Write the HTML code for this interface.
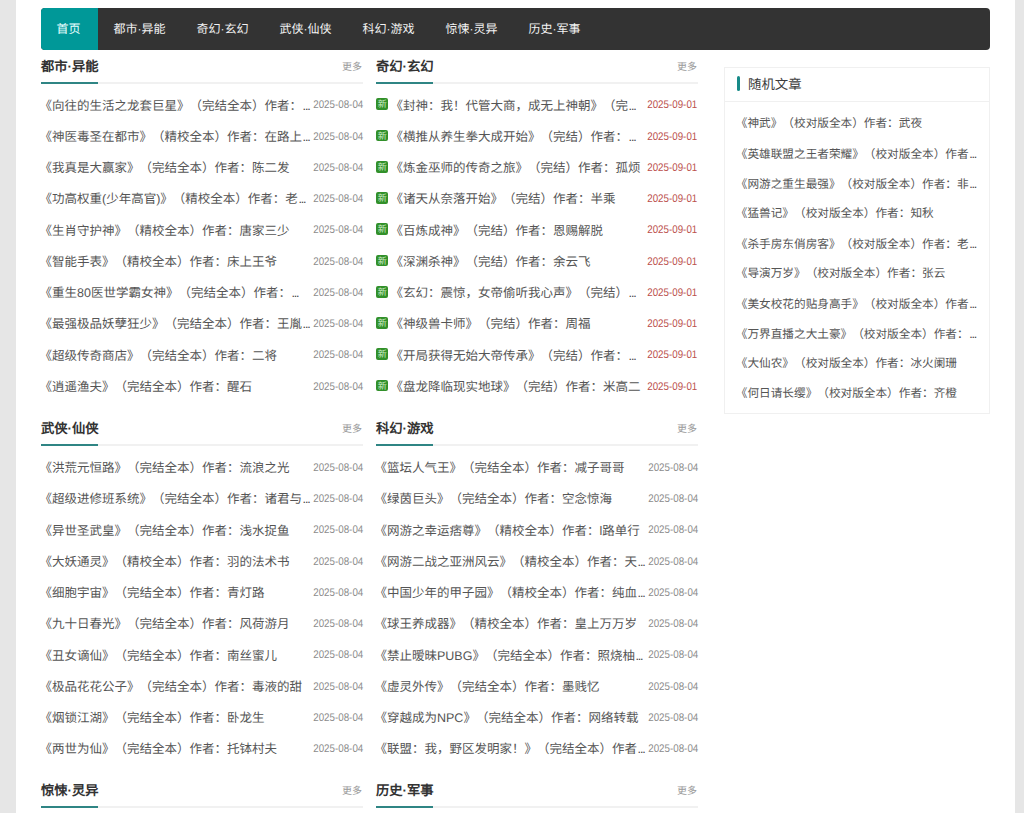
<!DOCTYPE html><html lang="zh-CN"><head><meta charset="utf-8"><title>page</title><style>
*{margin:0;padding:0;box-sizing:border-box}
html,body{width:1024px;height:813px;overflow:hidden}
body{background:#e6e6e6;font-family:"Liberation Sans",sans-serif;color:#444;position:relative;text-spacing-trim:space-all;text-rendering:geometricPrecision}
.wrap{position:absolute;left:16px;top:0;width:999px;height:813px;background:#fff}
.nav{position:absolute;left:41px;top:8px;width:949px;height:42px;background:#333;border-radius:4px;overflow:hidden}
.nav a{position:absolute;top:0;height:42px;line-height:42px;text-align:center;color:#f2f2f2;font-size:12px;text-decoration:none;white-space:nowrap}
.nav a.on{background:#009898;color:#e9ffff}
.sec{position:absolute;width:322px;height:362px}
.sec h2{position:absolute;left:0;top:58px;height:18px;line-height:18px;font-size:13.3px;font-weight:bold;color:#333;white-space:nowrap}
.sec .more{position:absolute;right:1px;top:61px;height:14px;line-height:14px;font-size:10px;color:#999}
.sec .ln{position:absolute;left:0;top:81.5px;width:322px;height:2px;background:#f1f1f1}
.sec .ul{position:absolute;left:0;top:81.5px;width:57px;height:2px;background:#2f8584}
.row{position:absolute;left:0;width:322px;height:20px;line-height:20px;white-space:nowrap}
.row .t{position:absolute;left:-1.5px;top:0;width:275px;overflow:hidden;font-size:12.5px;color:#555}
.row.i .t{left:14.5px;width:260px}
.row .d{position:absolute;right:0;top:-0.4px;font-size:11px;color:#8c8c8c;transform:scaleX(0.89);transform-origin:100% 50%;text-align:right}
.row.i .d{color:#bb4f4b;right:1px}
.row .ic{position:absolute;left:0;top:2.7px;width:12.3px;height:11.7px;background:#32902a;border-radius:2px;color:#cfeec8;font-size:9px;line-height:12px;text-align:center}
.side{position:absolute;left:724px;top:67px;width:266px;height:347px;border:1px solid #f0f0f0;background:#fff}
.side .hd{position:absolute;left:0;top:0;width:264px;height:34px;border-bottom:1px solid #f0f0f0}
.side .bar{position:absolute;left:11.8px;top:7.7px;width:3.3px;height:15px;background:#178a88;border-radius:2px}
.side .hd span{position:absolute;left:23px;top:8px;font-size:13.4px;line-height:17px;color:#3c3c3c}
.side .it{position:absolute;left:10.8px;width:250px;height:18px;line-height:18px;font-size:11.65px;color:#555;white-space:nowrap;overflow:hidden}
.el{font-style:normal;font-family:"Liberation Sans";font-size:12.5px;letter-spacing:-1.2px;margin-left:0.6px;color:#444}
</style></head><body>
<div class="wrap"></div>
<div class="nav">
<a class="on" style="left:0;width:57px;text-indent:-2px">首页</a>
<a style="left:57px;width:83px">都市·异能</a>
<a style="left:140px;width:83px">奇幻·玄幻</a>
<a style="left:223px;width:83px">武侠·仙侠</a>
<a style="left:306px;width:83px">科幻·游戏</a>
<a style="left:389px;width:83px">惊悚·灵异</a>
<a style="left:472px;width:83px">历史·军事</a>
</div>
<div class="sec" style="left:41px;top:0px"><h2>都市·异能</h2><span class="more">更多</span><div class="ln"></div><div class="ul"></div><div class="row" style="top:95.70px"><span class="t">《向往的生活之龙套巨星》（完结全本）作者：<i class="el">...</i></span><span class="d">2025-08-04</span></div><div class="row" style="top:126.95px"><span class="t">《神医毒圣在都市》（精校全本）作者：在路上<i class="el">...</i></span><span class="d">2025-08-04</span></div><div class="row" style="top:158.20px"><span class="t">《我真是大赢家》（完结全本）作者：陈二发</span><span class="d">2025-08-04</span></div><div class="row" style="top:189.45px"><span class="t">《功高权重(少年高官)》（精校全本）作者：老<i class="el">...</i></span><span class="d">2025-08-04</span></div><div class="row" style="top:220.70px"><span class="t">《生肖守护神》（精校全本）作者：唐家三少</span><span class="d">2025-08-04</span></div><div class="row" style="top:251.95px"><span class="t">《智能手表》（精校全本）作者：床上王爷</span><span class="d">2025-08-04</span></div><div class="row" style="top:283.20px"><span class="t">《重生80医世学霸女神》（完结全本）作者：<i class="el">...</i></span><span class="d">2025-08-04</span></div><div class="row" style="top:314.45px"><span class="t">《最强极品妖孽狂少》（完结全本）作者：王胤<i class="el">...</i></span><span class="d">2025-08-04</span></div><div class="row" style="top:345.70px"><span class="t">《超级传奇商店》（完结全本）作者：二将</span><span class="d">2025-08-04</span></div><div class="row" style="top:376.95px"><span class="t">《逍遥渔夫》（完结全本）作者：醒石</span><span class="d">2025-08-04</span></div></div>
<div class="sec" style="left:376px;top:0px"><h2>奇幻·玄幻</h2><span class="more">更多</span><div class="ln"></div><div class="ul"></div><div class="row i" style="top:95.70px"><span class="ic">新</span><span class="t">《封神：我！代管大商，成无上神朝》（完<i class="el">...</i></span><span class="d">2025-09-01</span></div><div class="row i" style="top:126.95px"><span class="ic">新</span><span class="t">《横推从养生拳大成开始》（完结）作者：<i class="el">...</i></span><span class="d">2025-09-01</span></div><div class="row i" style="top:158.20px"><span class="ic">新</span><span class="t">《炼金巫师的传奇之旅》（完结）作者：孤烦</span><span class="d">2025-09-01</span></div><div class="row i" style="top:189.45px"><span class="ic">新</span><span class="t">《诸天从奈落开始》（完结）作者：半乘</span><span class="d">2025-09-01</span></div><div class="row i" style="top:220.70px"><span class="ic">新</span><span class="t">《百炼成神》（完结）作者：恩赐解脱</span><span class="d">2025-09-01</span></div><div class="row i" style="top:251.95px"><span class="ic">新</span><span class="t">《深渊杀神》（完结）作者：余云飞</span><span class="d">2025-09-01</span></div><div class="row i" style="top:283.20px"><span class="ic">新</span><span class="t">《玄幻：震惊，女帝偷听我心声》（完结）<i class="el">...</i></span><span class="d">2025-09-01</span></div><div class="row i" style="top:314.45px"><span class="ic">新</span><span class="t">《神级兽卡师》（完结）作者：周福</span><span class="d">2025-09-01</span></div><div class="row i" style="top:345.70px"><span class="ic">新</span><span class="t">《开局获得无始大帝传承》（完结）作者：<i class="el">...</i></span><span class="d">2025-09-01</span></div><div class="row i" style="top:376.95px"><span class="ic">新</span><span class="t">《盘龙降临现实地球》（完结）作者：米高二</span><span class="d">2025-09-01</span></div></div>
<div class="sec" style="left:41px;top:362px"><h2>武侠·仙侠</h2><span class="more">更多</span><div class="ln"></div><div class="ul"></div><div class="row" style="top:96.20px"><span class="t">《洪荒元恒路》（完结全本）作者：流浪之光</span><span class="d">2025-08-04</span></div><div class="row" style="top:127.45px"><span class="t">《超级进修班系统》（完结全本）作者：诸君与<i class="el">...</i></span><span class="d">2025-08-04</span></div><div class="row" style="top:158.70px"><span class="t">《异世圣武皇》（完结全本）作者：浅水捉鱼</span><span class="d">2025-08-04</span></div><div class="row" style="top:189.95px"><span class="t">《大妖通灵》（精校全本）作者：羽的法术书</span><span class="d">2025-08-04</span></div><div class="row" style="top:221.20px"><span class="t">《细胞宇宙》（完结全本）作者：青灯路</span><span class="d">2025-08-04</span></div><div class="row" style="top:252.45px"><span class="t">《九十日春光》（完结全本）作者：风荷游月</span><span class="d">2025-08-04</span></div><div class="row" style="top:283.70px"><span class="t">《丑女谪仙》（完结全本）作者：南丝蜜儿</span><span class="d">2025-08-04</span></div><div class="row" style="top:314.95px"><span class="t">《极品花花公子》（完结全本）作者：毒液的甜</span><span class="d">2025-08-04</span></div><div class="row" style="top:346.20px"><span class="t">《烟锁江湖》（完结全本）作者：卧龙生</span><span class="d">2025-08-04</span></div><div class="row" style="top:377.45px"><span class="t">《两世为仙》（完结全本）作者：托钵村夫</span><span class="d">2025-08-04</span></div></div>
<div class="sec" style="left:376px;top:362px"><h2>科幻·游戏</h2><span class="more">更多</span><div class="ln"></div><div class="ul"></div><div class="row" style="top:96.20px"><span class="t">《篮坛人气王》（完结全本）作者：减子哥哥</span><span class="d">2025-08-04</span></div><div class="row" style="top:127.45px"><span class="t">《绿茵巨头》（完结全本）作者：空念惊海</span><span class="d">2025-08-04</span></div><div class="row" style="top:158.70px"><span class="t">《网游之幸运痞尊》（精校全本）作者：l路单行</span><span class="d">2025-08-04</span></div><div class="row" style="top:189.95px"><span class="t">《网游二战之亚洲风云》（精校全本）作者：天<i class="el">...</i></span><span class="d">2025-08-04</span></div><div class="row" style="top:221.20px"><span class="t">《中国少年的甲子园》（精校全本）作者：纯血<i class="el">...</i></span><span class="d">2025-08-04</span></div><div class="row" style="top:252.45px"><span class="t">《球王养成器》（精校全本）作者：皇上万万岁</span><span class="d">2025-08-04</span></div><div class="row" style="top:283.70px"><span class="t">《禁止暧昧PUBG》（完结全本）作者：照烧柚<i class="el">...</i></span><span class="d">2025-08-04</span></div><div class="row" style="top:314.95px"><span class="t">《虚灵外传》（完结全本）作者：墨贱忆</span><span class="d">2025-08-04</span></div><div class="row" style="top:346.20px"><span class="t">《穿越成为NPC》（完结全本）作者：网络转载</span><span class="d">2025-08-04</span></div><div class="row" style="top:377.45px"><span class="t">《联盟：我，野区发明家！》（完结全本）作者<i class="el">...</i></span><span class="d">2025-08-04</span></div></div>
<div class="sec" style="left:41px;top:724px"><h2>惊悚·灵异</h2><span class="more">更多</span><div class="ln"></div><div class="ul"></div></div>
<div class="sec" style="left:376px;top:724px"><h2>历史·军事</h2><span class="more">更多</span><div class="ln"></div><div class="ul"></div></div>
<div class="side"><div class="hd"><i class="bar"></i><span>随机文章</span></div>
<div class="it" style="top:47.00px">《神武》（校对版全本）作者：武夜</div>
<div class="it" style="top:77.00px">《英雄联盟之王者荣耀》（校对版全本）作者<i class="el">...</i></div>
<div class="it" style="top:107.00px">《网游之重生最强》（校对版全本）作者：非<i class="el">...</i></div>
<div class="it" style="top:137.00px">《猛兽记》（校对版全本）作者：知秋</div>
<div class="it" style="top:167.00px">《杀手房东俏房客》（校对版全本）作者：老<i class="el">...</i></div>
<div class="it" style="top:197.00px">《导演万岁》（校对版全本）作者：张云</div>
<div class="it" style="top:227.00px">《美女校花的贴身高手》（校对版全本）作者<i class="el">...</i></div>
<div class="it" style="top:257.00px">《万界直播之大土豪》（校对版全本）作者：<i class="el">...</i></div>
<div class="it" style="top:287.00px">《大仙农》（校对版全本）作者：冰火阑珊</div>
<div class="it" style="top:317.00px">《何日请长缨》（校对版全本）作者：齐橙</div>
</div>
</body></html>
